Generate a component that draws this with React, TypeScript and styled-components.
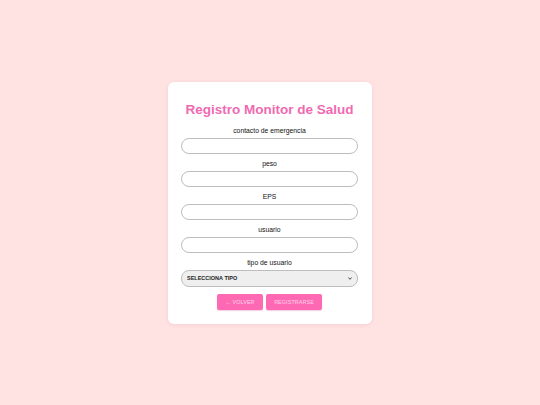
import React from "react";
import styled, { createGlobalStyle } from "styled-components";

const GlobalStyle = createGlobalStyle`
  html, body {
    margin: 0;
    padding: 0;
    background: #ffe3e3;
    font-family: "Liberation Sans", Arial, sans-serif;
  }
`;

const Page = styled.div`
  min-height: 100vh;
  display: flex;
  align-items: center;
  justify-content: center;
`;

const Card = styled.form`
  width: 204px;
  box-sizing: border-box;
  background: #ffffff;
  border-radius: 6px;
  padding: 20px 14px 14px 13px;
  box-shadow: 0 1px 4px rgba(220, 150, 160, 0.25);
  display: flex;
  flex-direction: column;
`;

const Title = styled.h1`
  margin: 0 0 8px;
  font-size: 13.5px;
  line-height: 16px;
  font-weight: bold;
  color: #f06ab2;
  text-align: center;
`;

const Label = styled.label`
  display: block;
  text-align: center;
  font-size: 6.8px;
  line-height: 9px;
  color: #111;
  margin-bottom: 3px;
`;

const Field = styled.div`
  display: flex;
  flex-direction: column;
  margin-bottom: 5px;
`;

const Input = styled.input`
  display: block;
  box-sizing: border-box;
  width: 100%;
  height: 16px;
  border: 1.5px solid #bdbdbd;
  border-radius: 8px;
  background: #fff;
  padding: 0 6px;
  font-size: 7px;
  outline: none;
`;

const SelectWrap = styled.div`
  position: relative;
  height: 17px;
`;

const SelectBox = styled.select`
  display: block;
  appearance: none;
  -webkit-appearance: none;
  box-sizing: border-box;
  width: 100%;
  height: 17px;
  border: 1.5px solid #bdbdbd;
  border-radius: 8px;
  background: #efefef;
  padding: 0 5px;
  font-family: "Liberation Sans", Arial, sans-serif;
  font-size: 5.5px;
  font-weight: bold;
  color: #222;
  outline: none;
`;

const Chevron = styled.svg`
  position: absolute;
  right: 6px;
  top: 7.5px;
  width: 4px;
  height: 3px;
  pointer-events: none;
`;

const Actions = styled.div`
  display: flex;
  justify-content: center;
  gap: 3px;
  margin-top: 2px;
`;

const Button = styled.button<{ $w: number }>`
  width: ${(p) => p.$w}px;
  height: 16px;
  border: none;
  border-radius: 2px;
  background: #ff69b4;
  color: #ffd3ea;
  font-family: "Liberation Sans", Arial, sans-serif;
  font-size: 5.4px;
  letter-spacing: 0.1px;
  padding: 0;
  cursor: pointer;
  box-shadow: 0 1px 1px rgba(200, 60, 130, 0.25);
`;

const fields = ["contacto de emergencia", "peso", "EPS", "usuario"];

export default function App() {
  return (
    <>
      <GlobalStyle />
      <Page>
        <Card onSubmit={(e) => e.preventDefault()}>
          <Title>Registro Monitor de Salud</Title>
          {fields.map((f) => (
            <Field key={f}>
              <Label>{f}</Label>
              <Input type="text" />
            </Field>
          ))}
          <Field>
            <Label>tipo de usuario</Label>
            <SelectWrap>
              <SelectBox defaultValue="">
                <option value="">SELECCIONA TIPO</option>
                <option value="paciente">PACIENTE</option>
                <option value="medico">MÉDICO</option>
              </SelectBox>
              <Chevron viewBox="0 0 4 3">
                <path d="M0.4 0.5 L2 2.3 L3.6 0.5" fill="none" stroke="#333" strokeWidth="0.9" />
              </Chevron>
            </SelectWrap>
          </Field>
          <Actions>
            <Button type="button" $w={46}>← VOLVER</Button>
            <Button type="submit" $w={56}>REGISTRARSE</Button>
          </Actions>
        </Card>
      </Page>
    </>
  );
}
